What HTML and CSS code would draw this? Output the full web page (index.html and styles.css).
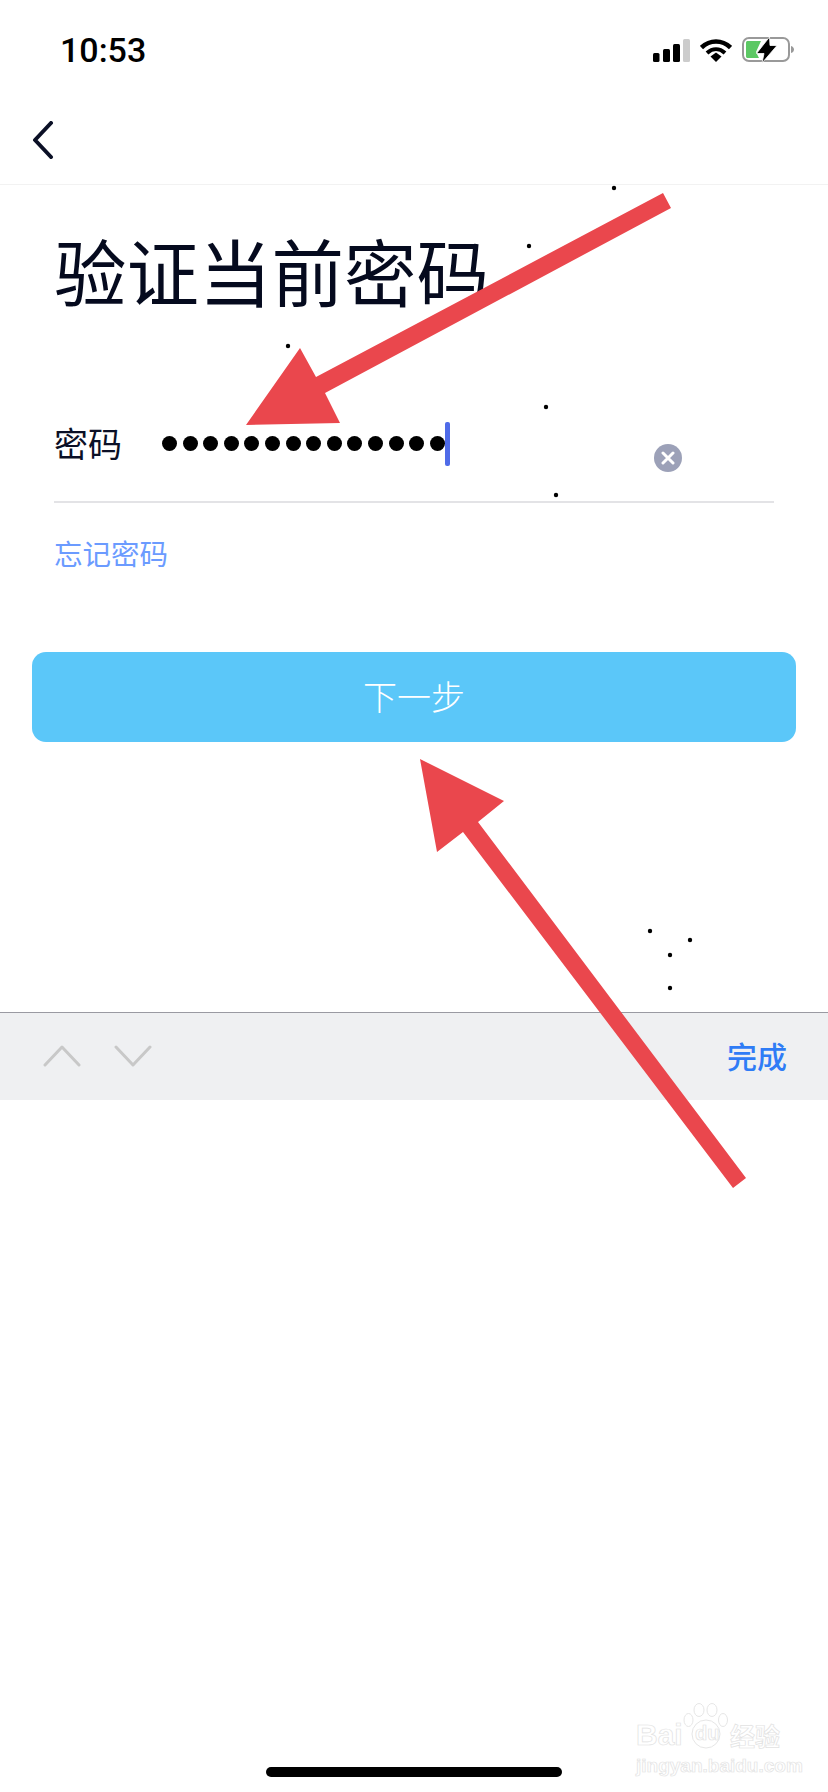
FILE: index.html
```html
<!DOCTYPE html>
<html lang="zh-CN">
<head>
    <meta charset="UTF-8">
    <meta name="viewport" content="width=device-width, initial-scale=1.0">
    <title>验证当前密码</title>
    <link rel="stylesheet" href="styles.css">
</head>
<body>
    <div class="page">
        <div class="status-bar">
            <span class="time">10:53</span>
            <div class="status-icons">
                <svg width="37" height="23" viewBox="0 0 37 23">
                    <rect x="0" y="14" width="6.5" height="9" rx="1.5" fill="#000"/>
                    <rect x="10" y="10" width="7" height="13" rx="1.5" fill="#000"/>
                    <rect x="20" y="5" width="7" height="18" rx="1.5" fill="#000"/>
                    <rect x="30" y="0" width="7" height="23" rx="1.5" fill="#ccc"/>
                </svg>
                <svg width="32" height="23" viewBox="0 0 32 23">
                    <path d="M1.500 8.500C10 0.500 22 0.500 30.500 8.500" fill="none" stroke="#000" stroke-width="4.500"/>
                    <path d="M7 14C12.500 9 19.500 9 25 14" fill="none" stroke="#000" stroke-width="4"/>
                    <path d="M10.500 17.500L16 13.500L21.500 17.500L16 23Z" fill="#000"/>
                </svg>
                <svg class="battery" width="52" height="26" viewBox="0 0 52 26">
                    <rect x="1" y="1" width="46" height="23" rx="6" fill="none" stroke="#999" stroke-width="2"/>
                    <path d="M49 9C51 9.500 52 11 52 12.500C52 14 51 15.500 49 16Z" fill="#999"/>
                    <path d="M4 6C4 4.500 4.500 4 6 4H19L14 15L17 21H6C4.500 21 4 20.500 4 19Z" fill="#5cc864"/>
                    <path d="M27.500 0L14.500 16.500H22L20 26L35 8.500H28Z" fill="#000" stroke="#fff" stroke-width="0.800"/>
                </svg>
            </div>
        </div>

        <div class="nav-bar">
            <svg class="back-icon" width="22" height="38" viewBox="0 0 22 38">
                <path d="M19 2L3 19L19 36" fill="none" stroke="#0b1026" stroke-width="4" stroke-linecap="round" stroke-linejoin="round"/>
            </svg>
        </div>

        <div class="content">
            <h1 class="title">验证当前密码</h1>
            <div class="field">
                <span class="field-label">密码</span>
                <div class="dots">
                    <i></i><i></i><i></i><i></i><i></i><i></i><i></i>
                    <i></i><i></i><i></i><i></i><i></i><i></i><i></i>
                </div>
                <span class="caret"></span>
                <span class="clear-btn">
                    <svg width="14" height="14" viewBox="0 0 14 14">
                        <path d="M2 2L12 12M12 2L2 12" stroke="#fff" stroke-width="3" stroke-linecap="round"/>
                    </svg>
                </span>
            </div>
            <a class="forgot">忘记密码</a>
        </div>

        <div class="btn-wrap">
            <button class="next-btn">下一步</button>
        </div>

        <div class="toolbar">
            <div class="toolbar-arrows">
                <svg width="38" height="22" viewBox="0 0 38 22">
                    <path d="M2 20L19 2L36 20" fill="none" stroke="#c8c8c8" stroke-width="3" stroke-linecap="round" stroke-linejoin="round"/>
                </svg>
                <svg width="38" height="22" viewBox="0 0 38 22">
                    <path d="M2 2L19 20L36 2" fill="none" stroke="#c8c8c8" stroke-width="3" stroke-linecap="round" stroke-linejoin="round"/>
                </svg>
            </div>
            <span class="done">完成</span>
        </div>

        <div class="home-row"><span class="home-indicator"></span></div>

        <svg class="overlay" width="828" height="1792" viewBox="0 0 828 1792">
            <polygon points="663,193 671,208 325,393 340,423 246,425 300,348 316,377" fill="#ea474d"/>
            <polygon points="420,759 504,801 478,822 746,1178 733,1188 463,832 437,852" fill="#ea474d"/>
            <g fill="#000">
                <circle cx="614" cy="188" r="2.200"/>
                <circle cx="529" cy="246" r="2.200"/>
                <circle cx="288" cy="346" r="2.200"/>
                <circle cx="546" cy="407" r="2.200"/>
                <circle cx="556" cy="495" r="2.200"/>
                <circle cx="650" cy="931" r="2.200"/>
                <circle cx="690" cy="940" r="2.200"/>
                <circle cx="670" cy="955" r="2.200"/>
                <circle cx="670" cy="988" r="2.200"/>
            </g>
        </svg>

        <div class="watermark">
            <div class="wm-top">
                <span class="wm-bai">Bai</span>
                <span class="wm-paw">
                    <svg width="46" height="46" viewBox="0 0 46 46">
                        <g fill="#fff" stroke="#e6e6e6" stroke-width="1">
                            <ellipse cx="5.500" cy="17" rx="4.500" ry="6.500"/>
                            <ellipse cx="16" cy="7" rx="5" ry="6.500"/>
                            <ellipse cx="29" cy="7" rx="5" ry="6.500"/>
                            <ellipse cx="40" cy="17" rx="4.500" ry="6.500"/>
                            <circle cx="23" cy="31" r="14"/>
                        </g>
                    </svg>
                    <span class="wm-du">du</span>
                </span>
                <span class="wm-cn">经验</span>
            </div>
            <div class="wm-url">jingyan.baidu.com</div>
        </div>
    </div>
</body>
</html>
```

FILE: styles.css
```css
* {
    box-sizing: border-box;
}
html, body {
    margin: 0;
    padding: 0;
    background: #fff;
}
body {
    font-family: "Noto Sans CJK SC", "Noto Sans", sans-serif;
    color: #0b1026;
}
.page {
    position: relative;
    width: 828px;
    height: 1792px;
    overflow: hidden;
}
.status-bar {
    height: 100px;
    padding: 0 34px 0 60px;
    display: flex;
    justify-content: space-between;
    align-items: center;
}
.time {
    font-family: Roboto, "Liberation Sans", sans-serif;
    font-size: 34px;
    font-weight: 500;
    color: #000;
}
.status-icons {
    display: flex;
    align-items: center;
    gap: 10px;
}
.nav-bar {
    height: 85px;
    padding: 21px 0 0 32px;
    border-bottom: 1px solid #f2f2f2;
}
.back-icon {
    display: block;
}
.content {
    padding: 0 54px;
}
.title {
    margin: 40px 0 0;
    font-size: 72.500px;
    font-weight: 400;
    line-height: 90px;
    color: #050a1e;
}
.field {
    height: 102px;
    margin-top: 86px;
    border-bottom: 2px solid #e3e3e6;
    display: flex;
    align-items: flex-start;
}
.field-label {
    width: 108px;
    font-size: 34px;
    line-height: 48px;
    margin-top: 18px;
}
.dots {
    display: flex;
    gap: 5.600px;
    margin-top: 35px;
}
.dots i {
    display: block;
    width: 15px;
    height: 15px;
    border-radius: 50%;
    background: #000;
}
.caret {
    width: 5px;
    height: 44px;
    margin-top: 21px;
    border-radius: 2px;
    background: #4f6be8;
}
.clear-btn {
    width: 28px;
    height: 28px;
    margin: 43px 92px 0 auto;
    border-radius: 50%;
    background: #9ca1b8;
    display: flex;
    align-items: center;
    justify-content: center;
}
.forgot {
    display: block;
    margin-top: 30px;
    font-size: 28.500px;
    line-height: 40px;
    color: #6b9bff;
}
.btn-wrap {
    padding: 0 32px;
    margin-top: 79px;
}
.next-btn {
    display: block;
    width: 100%;
    height: 90px;
    border: none;
    border-radius: 14px;
    padding: 0 0 4px;
    background: #5bc7f9;
    color: #fff;
    font-family: inherit;
    font-size: 34px;
    font-weight: 300;
}
.toolbar {
    height: 88px;
    margin-top: 270px;
    padding: 0 41px 0 43px;
    border-top: 1px solid #9a9aa2;
    background: #eff0f2;
    display: flex;
    justify-content: space-between;
    align-items: center;
}
.toolbar-arrows {
    display: flex;
    gap: 33px;
    margin-top: -2px;
}
.done {
    font-size: 30px;
    font-weight: 500;
    line-height: 40px;
    margin-top: -3px;
    color: #2f7cf6;
}
.home-row {
    margin-top: 667px;
    display: flex;
    justify-content: center;
}
.home-indicator {
    width: 296px;
    height: 10px;
    border-radius: 5px;
    background: #000;
}
.overlay {
    position: absolute;
    top: 0;
    left: 0;
    pointer-events: none;
}
.watermark {
    position: absolute;
    top: 1703px;
    left: 636px;
    width: 150px;
    color: transparent;
    -webkit-text-stroke: 0.7px #e2e2e2;
}
.wm-top {
    display: flex;
    align-items: flex-end;
    height: 46px;
}
.wm-bai {
    font-family: "Liberation Sans", sans-serif;
    font-size: 30px;
    font-weight: 700;
    line-height: 28px;
    width: 47px;
}
.wm-paw {
    position: relative;
    width: 46px;
    height: 46px;
}
.wm-paw svg {
    display: block;
}
.wm-du {
    position: absolute;
    left: 12px;
    bottom: 5px;
    font-family: "Liberation Sans", sans-serif;
    font-size: 20px;
    font-weight: 700;
    line-height: 22px;
}
.wm-cn {
    margin-left: 1px;
    font-size: 25px;
    font-weight: 700;
    line-height: 28px;
    white-space: nowrap;
}
.wm-url {
    margin-top: 6px;
    font-family: "Liberation Sans", sans-serif;
    font-size: 19px;
    font-weight: 700;
    line-height: 22px;
    white-space: nowrap;
}
```
